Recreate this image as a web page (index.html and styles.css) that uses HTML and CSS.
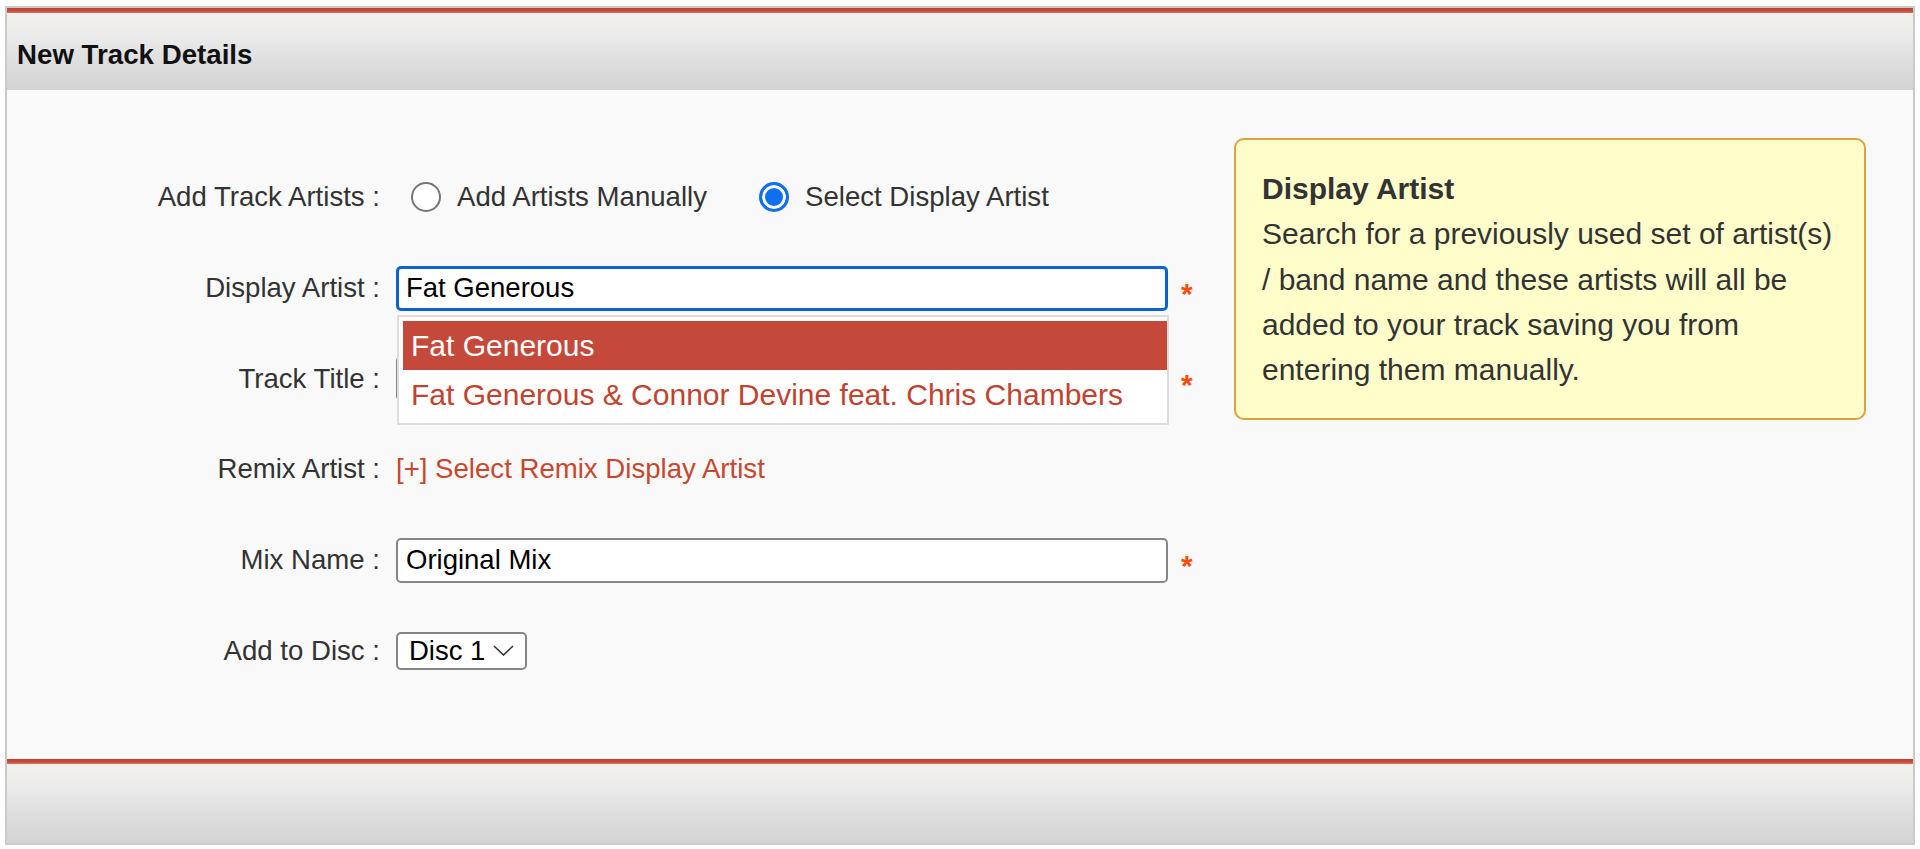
FILE: index.html
```html
<!DOCTYPE html>
<html lang="en">
<head>
<meta charset="utf-8">
<title>New Track Details</title>
<link rel="stylesheet" href="styles.css">
</head>
<body>
<div class="frame">
  <div class="bar-red"></div>
  <div class="header"><h1>New Track Details</h1></div>
  <div class="content">
    <div class="form">
      <div class="label">Add Track Artists :</div>
      <div class="field radios">
        <div class="opt"><span class="radio"></span><span>Add Artists Manually</span></div>
        <div class="opt"><span class="radio on"></span><span>Select Display Artist</span></div>
      </div>

      <div class="label">Display Artist :</div>
      <div class="field">
        <div class="ac">
          <input class="input focus" type="text" value="Fat Generous">
          <ul class="dropdown">
            <li class="active">Fat Generous</li>
            <li>Fat Generous &amp; Connor Devine feat. Chris Chambers</li>
          </ul>
        </div>
        <span class="req">*</span>
      </div>

      <div class="label">Track Title :</div>
      <div class="field">
        <input class="input" type="text" value="">
        <span class="req">*</span>
      </div>

      <div class="label">Remix Artist :</div>
      <div class="field">
        <span class="link">[+] Select Remix Display Artist</span>
      </div>

      <div class="label">Mix Name :</div>
      <div class="field">
        <input class="input" type="text" value="Original Mix">
        <span class="req">*</span>
      </div>

      <div class="label">Add to Disc :</div>
      <div class="field">
        <div class="select">
          <span>Disc 1</span>
          <svg class="chev" width="21" height="11" viewBox="0 0 21 11"><polyline points="1,1 10.5,10 20,1" fill="none" stroke="#333" stroke-width="1.6"/></svg>
        </div>
      </div>
    </div>

    <aside class="tip">
      <b>Display Artist</b>
      Search for a previously used set of artist(s) / band name and these artists will all be added to your track saving you from entering them manually.
    </aside>
  </div>
  <div class="bar-red"></div>
  <div class="footer"></div>
</div>
</body>
</html>
```
FILE: styles.css
```css
html, body {
  margin: 0;
  padding: 0;
  background: #ffffff;
}

body {
  font-family: "Liberation Sans", Arial, Helvetica, sans-serif;
  color: #333333;
}

.frame {
  margin: 6px 5px 0;
  height: 839px;
  border: 2px solid #cbcbcb;
  box-sizing: border-box;
  display: flex;
  flex-direction: column;
}

.bar-red {
  height: 5px;
  flex: none;
  background: linear-gradient(#bd4435, #c54a3b 55%, #da7362);
}

.header {
  height: 77px;
  flex: none;
  display: flex;
  align-items: center;
  padding-left: 10px;
  padding-top: 6px;
  box-sizing: border-box;
  background: linear-gradient(#f4f1ec 0%, #ebebeb 30%, #dedede 62%, #d4d4d4 100%);
}

.header h1 {
  margin: 0;
  font-size: 27.7px;
  font-weight: bold;
  color: #111111;
}

.content {
  height: 669px;
  flex: none;
  box-sizing: border-box;
  background: #f9f9f9;
  display: flex;
  align-items: flex-start;
  padding-top: 48px;
}

.footer {
  flex: 1;
  background: linear-gradient(#f4f1ec 0%, #ebebeb 30%, #dedede 62%, #d4d4d4 100%);
}

.form {
  flex: none;
  width: 1227px;
  margin-top: 14px;
  display: grid;
  grid-template-columns: 373px 1fr;
  grid-auto-rows: 90.7px;
  column-gap: 16px;
  align-items: center;
}

.label {
  text-align: right;
  font-size: 27.6px;
  color: #333333;
  white-space: nowrap;
}

.field {
  display: flex;
  align-items: center;
}

.radios {
  padding-left: 15px;
  gap: 52px;
}

.opt {
  display: flex;
  align-items: center;
  gap: 16px;
  font-size: 27.6px;
  color: #333333;
}

.radio {
  width: 30px;
  height: 30px;
  box-sizing: border-box;
  border-radius: 50%;
  border: 2px solid #767676;
  background: #ffffff;
  flex: none;
}

.radio.on {
  border: 3px solid #0e6ff0;
  background: #0e6ff0;
  box-shadow: inset 0 0 0 3px #ffffff;
}

.ac {
  position: relative;
}

.input {
  display: block;
  width: 772px;
  height: 45px;
  box-sizing: border-box;
  margin: 0;
  border: 2px solid #868686;
  border-radius: 5px;
  background: #ffffff;
  padding: 0 8px;
  font-family: "Liberation Sans", Arial, Helvetica, sans-serif;
  font-size: 27.5px;
  color: #000000;
  outline: none;
}

.input.focus {
  border: 3px solid #0b63cf;
  padding-left: 7px;
}

.req {
  color: #ff4a0a;
  font-size: 30px;
  font-weight: bold;
  margin-left: 13px;
  padding-top: 12px;
}

.dropdown {
  position: absolute;
  top: calc(100% + 4px);
  left: 1px;
  width: 772px;
  box-sizing: border-box;
  margin: 0;
  padding: 4px 0 4px 4px;
  list-style: none;
  background: #ffffff;
  border: 2px solid #dddddd;
  z-index: 2;
}

.dropdown li {
  height: 49px;
  line-height: 49px;
  padding-left: 8px;
  font-size: 30px;
  color: #c0432f;
  white-space: nowrap;
}

.dropdown li.active {
  background: #c4493a;
  color: #ffffff;
}

.link {
  font-size: 27.6px;
  color: #c8472f;
}

.select {
  width: 131px;
  height: 38px;
  box-sizing: border-box;
  border: 2px solid #858585;
  border-radius: 5px;
  background: #ffffff;
  display: flex;
  align-items: center;
  justify-content: space-between;
  padding: 0 11px 0 11px;
  font-size: 27.5px;
  color: #000000;
}

.chev {
  display: block;
}

.tip {
  flex: none;
  width: 632px;
  box-sizing: border-box;
  background: #fffecb;
  border: 2px solid #d7a43f;
  border-radius: 10px;
  padding: 26px 28px 26px 26px;
  font-size: 30px;
  line-height: 45.3px;
  color: #333333;
}

.tip b {
  display: block;
}
```
